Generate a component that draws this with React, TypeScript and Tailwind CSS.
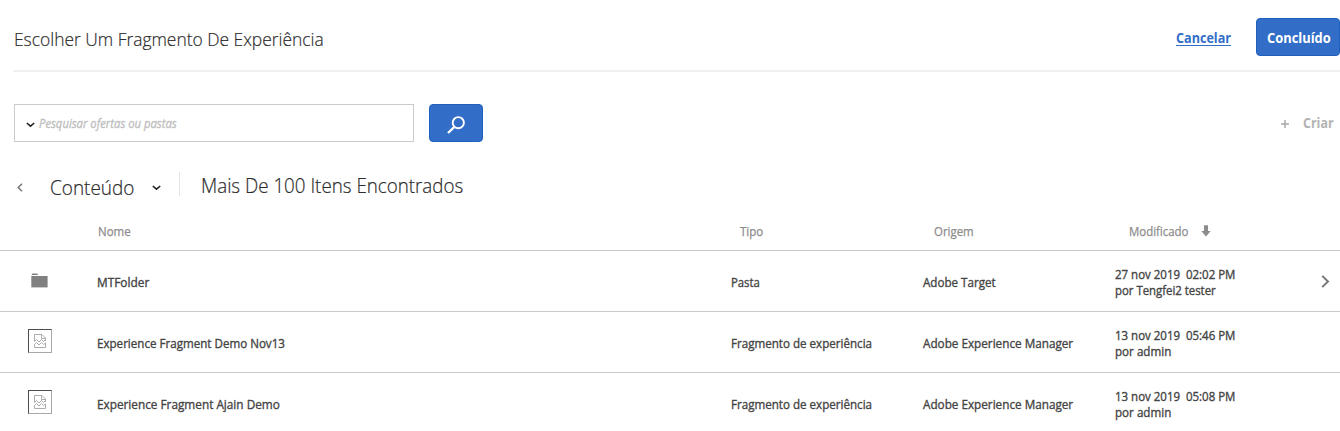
import type { ReactNode } from 'react'

type Item = {
  name: string
  type: string
  origin: string
  date: string
  author: string
  folder?: boolean
  nameFit: string
  typeFit: string
  originFit: string
  dateFit: string
  authorFit: string
}

const items: Item[] = [
  {
    name: 'MTFolder', type: 'Pasta', origin: 'Adobe Target',
    date: '27 nov 2019\u00a0 02:02 PM', author: 'por Tengfei2 tester', folder: true,
    nameFit: 'scale-x-[0.95]', typeFit: 'scale-x-[0.905]', originFit: 'scale-x-[0.93]',
    dateFit: 'scale-x-[0.918]', authorFit: 'scale-x-[0.91]',
  },
  {
    name: 'Experience Fragment Demo Nov13', type: 'Fragmento de experiência', origin: 'Adobe Experience Manager',
    date: '13 nov 2019\u00a0 05:46 PM', author: 'por admin',
    nameFit: 'scale-x-[0.928]', typeFit: 'scale-x-[0.928]', originFit: 'scale-x-[0.938]',
    dateFit: 'scale-x-[0.918]', authorFit: 'scale-x-[0.93]',
  },
  {
    name: 'Experience Fragment Ajain Demo', type: 'Fragmento de experiência', origin: 'Adobe Experience Manager',
    date: '13 nov 2019\u00a0 05:08 PM', author: 'por admin',
    nameFit: 'scale-x-[0.943]', typeFit: 'scale-x-[0.928]', originFit: 'scale-x-[0.938]',
    dateFit: 'scale-x-[0.918]', authorFit: 'scale-x-[0.93]',
  },
]

function Text({ fit, className = '', children }: { fit: string; className?: string; children: ReactNode }) {
  return <span className={`inline-block origin-left whitespace-nowrap ${fit} ${className}`}>{children}</span>
}

function ChevronDown({ className = '' }: { className?: string }) {
  return (
    <svg width="9" height="6" viewBox="0 0 9 6" className={className} fill="none" stroke="#222" strokeWidth="1.6">
      <path d="M0.8 1 L4.5 4.2 L8.2 1" />
    </svg>
  )
}

function FolderIcon() {
  return (
    <svg width="17" height="15" viewBox="0 0 17 15" fill="#808080">
      <path d="M0.5 2 L1.3 0.6 H6.2 L7.2 2 Z" />
      <path d="M0.3 3 H16.6 V14.4 H0.3 Z" />
    </svg>
  )
}

function BrokenImage() {
  return (
    <div className="-mt-[2px] flex size-6 items-center justify-center border border-t-[#4d4d4d] border-l-[#4d4d4d] border-r-[#a8a8a8] border-b-[#a8a8a8]">
      <svg width="14" height="16" viewBox="0 0 14 16" fill="none" stroke="#acacac" strokeWidth="1">
        <path d="M1.5 8.5 V1.5 H9 L12.5 5 V8" />
        <path d="M8.5 1.5 V5.5 H12.5" />
        <path d="M1.5 8.5 L3.5 6.5 L6 9 L8.5 6.5 L10.5 8.5 L12.5 6.5" />
        <path d="M1.5 14.5 V11.5 L3.5 9.5 L6 12 L8.5 9.5 L10.5 11.5 L12.5 10 V14.5 Z" />
      </svg>
    </div>
  )
}

function Header() {
  return (
    <header className="ml-[13px] flex h-[72px] items-start border-b-2 border-[#f0f0f0]">
      <h1 className="w-[1162px] shrink-0 pt-[25px] pl-px text-[19px] leading-7 font-light text-[#2c2c2c] [-webkit-text-stroke:0.2px]">
        <Text fit="scale-x-[0.916]">Escolher Um Fragmento De Experiência</Text>
      </h1>
      <a className="w-[81px] shrink-0 pt-[25px] pl-px text-[14px] leading-[26px] font-bold text-[#326ec8]">
        <Text fit="scale-x-[0.9]" className="underline underline-offset-2">Cancelar</Text>
      </a>
      <button className="mt-[18px] flex h-[38px] w-[84px] shrink-0 items-center rounded-[4px] border border-[#1f5fbd] bg-[#326ec8] pl-[10px] text-[14px] font-bold text-white">
        <Text fit="scale-x-[0.92]">Concluído</Text>
      </button>
    </header>
  )
}

function SearchBar() {
  return (
    <div className="mt-8 flex h-[38px] items-center pl-[14px]">
      <div className="flex h-[38px] w-[400px] items-center border border-[#cbcbcb] pl-[11px]">
        <ChevronDown className="mt-1" />
        <span className="mt-px ml-1 text-[12px] text-[#bdbdbd] italic [-webkit-text-stroke:0.3px]">
          <Text fit="scale-x-[0.94]">Pesquisar ofertas ou pastas</Text>
        </span>
      </div>
      <button className="ml-[15px] flex h-[38px] w-[54px] items-center justify-center rounded-[4px] border border-[#1f5fbd] bg-[#326ec8]">
        <svg width="18" height="18" viewBox="0 0 18 18" fill="none" stroke="white" className="mt-[3px]">
          <circle cx="11.3" cy="6.7" r="5.6" strokeWidth="1.9" />
          <path d="M7.4 10.8 L1 17" strokeWidth="2.3" />
        </svg>
      </button>
      <svg width="8" height="8" viewBox="0 0 8 8" className="mt-[2px] ml-[798px]" stroke="#a9a9a9" strokeWidth="1.5">
        <path d="M4 0 V8 M0 4 H8" />
      </svg>
      <span className="-mt-[2px] ml-[14px] text-[14px] font-bold text-[#b3b3b3]">
        <Text fit="scale-x-[0.89]">Criar</Text>
      </span>
    </div>
  )
}

function Breadcrumb() {
  return (
    <div className="flex h-[68px] items-start pt-[30px] text-[20.5px] leading-7 font-light text-[#2c2c2c] [-webkit-text-stroke:0.2px]">
      <svg width="6" height="9" viewBox="0 0 6 9" className="mt-[11px] ml-[17px]" fill="none" stroke="#777" strokeWidth="1.5">
        <path d="M5 0.7 L1.2 4.5 L5 8.3" />
      </svg>
      <span className="mt-px ml-[27px] w-[102px]">
        <Text fit="scale-x-[0.925]">Conteúdo</Text>
      </span>
      <ChevronDown className="mt-[13px]" />
      <span className="ml-[18px] h-6 w-px bg-[#e4e4e4]" />
      <span className="-mt-px ml-[21px]">
        <Text fit="scale-x-[0.915]">Mais De 100 Itens Encontrados</Text>
      </span>
    </div>
  )
}

function TableHead() {
  return (
    <div className="flex h-[41px] items-center border-b border-[#cacaca] pt-1 pl-[97.5px] text-[12.5px] text-[#8c8c8c] [-webkit-text-stroke:0.25px]">
      <span className="w-[642px]"><Text fit="scale-x-[0.92]">Nome</Text></span>
      <span className="w-[194.5px]"><Text fit="scale-x-[0.92]">Tipo</Text></span>
      <span className="w-[194.5px]"><Text fit="scale-x-[0.915]">Origem</Text></span>
      <span className="w-[72.5px]"><Text fit="scale-x-[0.915]">Modificado</Text></span>
      <svg width="10" height="12" viewBox="0 0 10 12" fill="#8c8c8c" className="-mt-[3px]">
        <path d="M3 0.3 H7 V6 H9.7 L5 11.5 L0.3 6 H3 Z" />
      </svg>
    </div>
  )
}

function Row({ item }: { item: Item }) {
  return (
    <div className="flex h-[61px] shrink-0 items-center border-b border-[#cacaca] text-[12.5px] leading-4 text-[#444] [-webkit-text-stroke:0.35px]">
      <div className="flex w-[96.5px] pl-7">
        {item.folder ? <div className="-mt-px pl-[3px]"><FolderIcon /></div> : <BrokenImage />}
      </div>
      <span className="w-[634px] pt-[3px]"><Text fit={item.nameFit}>{item.name}</Text></span>
      <span className="w-[192px] pt-[3px]"><Text fit={item.typeFit}>{item.type}</Text></span>
      <span className="w-[192px] pt-[3px]"><Text fit={item.originFit}>{item.origin}</Text></span>
      <div className="flex w-[206.5px] flex-col pt-[3px]">
        <Text fit={item.dateFit}>{item.date}</Text>
        <Text fit={item.authorFit}>{item.author}</Text>
      </div>
      {item.folder && (
        <svg width="9" height="13" viewBox="0 0 9 13" fill="none" stroke="#777" strokeWidth="2">
          <path d="M1.2 0.9 L7 6.5 L1.2 12.1" />
        </svg>
      )}
    </div>
  )
}

export default function App() {
  return (
    <main className="h-[431px] w-[1340px] overflow-hidden bg-white font-['Open_Sans','Noto_Sans',sans-serif]">
      <Header />
      <SearchBar />
      <Breadcrumb />
      <TableHead />
      {items.map((item) => (
        <Row key={item.name} item={item} />
      ))}
    </main>
  )
}
